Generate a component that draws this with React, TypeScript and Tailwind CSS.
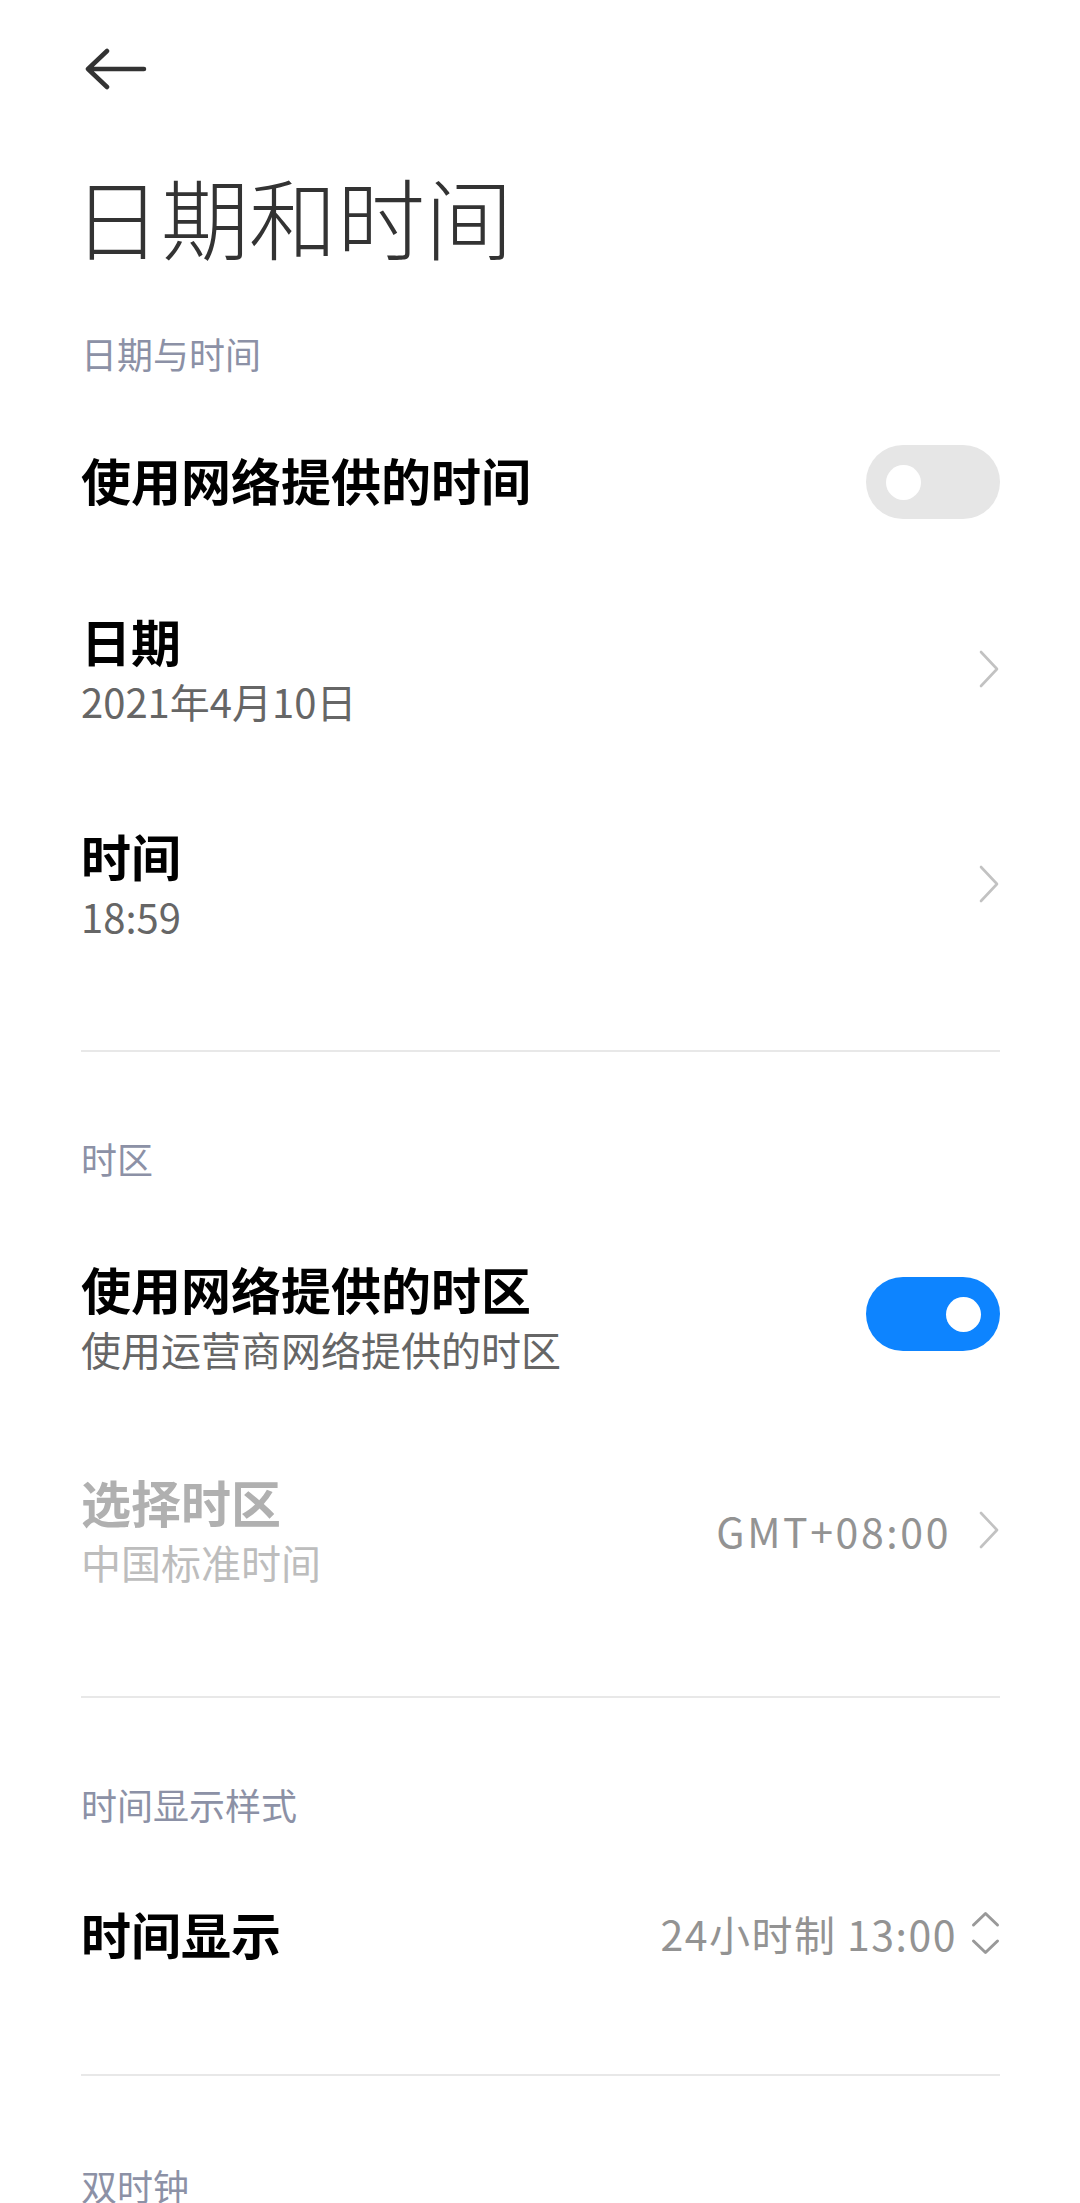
import React from 'react'

// 日期和时间 settings page (MIUI style)

function BackArrow() {
    return (
        <svg width="62" height="42" viewBox="0 0 62 42" fill="none">
            <path d="M3 21 L59 21 M22 3 L3 21 L22 39" stroke="#333333" strokeWidth="4.5" strokeLinecap="round" strokeLinejoin="round" />
        </svg>
    )
}

function Chevron() {
    return (
        <svg width="22" height="38" viewBox="0 0 22 38" fill="none">
            <path d="M3 2 L19 19 L3 36" stroke="#c2c2c2" strokeWidth="2.6" strokeLinecap="round" strokeLinejoin="round" />
        </svg>
    )
}

function UpDown() {
    return (
        <svg width="29" height="44" viewBox="0 0 29 44" fill="none">
            <path d="M2.5 14 L14.5 2.5 L26.5 14 M2.5 30 L14.5 41.5 L26.5 30" stroke="#999999" strokeWidth="3" strokeLinecap="round" strokeLinejoin="round" />
        </svg>
    )
}

function Toggle({ on, extra }: { on: boolean; extra: string }) {
    return (
        <div
            className={
                on
                    ? `flex items-center justify-end w-[134px] h-[74px] rounded-full bg-[#0d84ff] pr-[19px] shrink-0 ${extra}`
                    : `flex items-center justify-start w-[134px] h-[74px] rounded-full bg-[#e6e6e6] pl-[20px] shrink-0 ${extra}`
            }
        >
            <div className="w-[35px] h-[35px] rounded-full bg-white" />
        </div>
    )
}

function SectionHeader({ text, mt }: { text: string; mt: string }) {
    return <p className={`${mt} text-[36px] leading-[50px] text-[#8c91a6]`}>{text}</p>
}

function Divider({ mt }: { mt: string }) {
    return <div className={`${mt} h-[2px] bg-[#e8e8e8]`} />
}

export default function App() {
    return (
        <div className="w-[1080px] min-h-[2203px] bg-white overflow-hidden font-['Noto_Sans_CJK_SC','Noto_Sans',sans-serif]">
            {/* 顶部返回 */}
            <div className="h-[138px] flex items-center pl-[85px]">
                <BackArrow />
            </div>

            <div className="pl-[81px] pr-[80px]">
                <h1 className="mt-[27px] h-[100px] text-[88px] leading-[100px] font-light text-[#333333] -ml-[8px]">日期和时间</h1>

                {/* 日期与时间 */}
                <SectionHeader text="日期与时间" mt="mt-[63px]" />

                <div className="mt-[69px] flex items-center justify-between h-[64px]">
                    <p className="text-[50px] leading-[64px] font-bold text-black">使用网络提供的时间</p>
                    <Toggle on={false} extra="mt-[6px]" />
                </div>

                <div className="mt-[97px] flex items-center justify-between">
                    <div>
                        <p className="text-[50px] leading-[64px] font-bold text-black">日期</p>
                        <p className="text-[40px] leading-[58px] text-[#666666]">2021年4月10日</p>
                    </div>
                    <Chevron />
                </div>

                <div className="mt-[93px] flex items-center justify-between">
                    <div>
                        <p className="text-[50px] leading-[64px] font-bold text-black">时间</p>
                        <p className="text-[40px] leading-[58px] text-[#666666]">18:59</p>
                    </div>
                    <Chevron />
                </div>

                <Divider mt="mt-[105px]" />

                {/* 时区 */}
                <SectionHeader text="时区" mt="mt-[81px]" />

                <div className="mt-[73px] flex items-center justify-between">
                    <div>
                        <p className="text-[50px] leading-[64px] font-bold text-black">使用网络提供的时区</p>
                        <p className="text-[40px] leading-[58px] text-[#666666]">使用运营商网络提供的时区</p>
                    </div>
                    <Toggle on={true} extra="mb-[6px]" />
                </div>

                <div className="mt-[91px] flex items-center justify-between">
                    <div>
                        <p className="text-[50px] leading-[64px] font-bold text-[#b0b0b0]">选择时区</p>
                        <p className="text-[40px] leading-[58px] text-[#bdbdbd]">中国标准时间</p>
                    </div>
                    <div className="flex items-center gap-[27px]">
                        <span className="text-[41px] leading-[58px] tracking-[2.6px] text-[#939393]">GMT+08:00</span>
                        <Chevron />
                    </div>
                </div>

                <Divider mt="mt-[105px]" />

                {/* 时间显示样式 */}
                <SectionHeader text="时间显示样式" mt="mt-[81px]" />

                <div className="mt-[72px] flex items-center justify-between h-[64px]">
                    <p className="text-[50px] leading-[64px] font-bold text-black">时间显示</p>
                    <div className="flex items-center gap-[14px]">
                        <span className="text-[41px] leading-[58px] tracking-[1.5px] text-[#939393]">24小时制 13:00</span>
                        <UpDown />
                    </div>
                </div>

                <Divider mt="mt-[109px]" />

                <SectionHeader text="双时钟" mt="mt-[84px]" />
            </div>
        </div>
    )
}
